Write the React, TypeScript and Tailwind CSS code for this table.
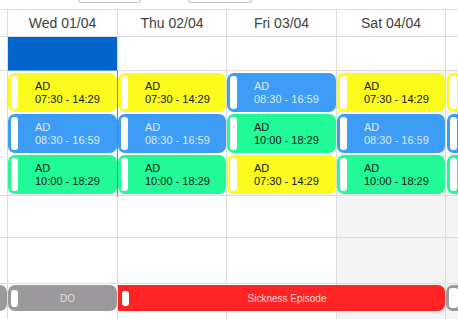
import React from "react";

/** Grille planning — vue semaine (colonnes jour) */
const cols = "grid grid-cols-[8px_110px_109px_110px_109px_1fr]";

type Kind = "am" | "mid" | "pm";

const shiftStyle: Record<Kind, { bg: string; text: string; time: string }> = {
    am: { bg: "bg-[#fbfb1e]", text: "text-[#151515]", time: "07:30 - 14:29" },
    mid: { bg: "bg-[#3d9df6]", text: "text-[#dcecff]", time: "08:30 - 16:59" },
    pm: { bg: "bg-[#22f997]", text: "text-[#151515]", time: "10:00 - 18:29" },
};

function Shift({ kind, clip }: { kind: Kind; clip?: boolean }) {
    const s = shiftStyle[kind];
    return (
        <div className={`flex h-[39px] shrink-0 items-center rounded-[7px] ${s.bg} ${clip ? "ml-[1px] w-[40px]" : ""}`}>
            <span className="ml-[3px] h-[33px] w-[7px] shrink-0 rounded-[3px] bg-white" />
            {/* le texte du dimanche est hors écran */}
            {!clip && (
                <div className={`ml-[17px] whitespace-nowrap text-[11px] leading-[13px] ${s.text}`}>
                    <div>AD</div>
                    <div>{s.time}</div>
                </div>
            )}
        </div>
    );
}

const days = ["Wed 01/04", "Thu 02/04", "Fri 03/04", "Sat 04/04"];

// ordre des shifts par jour (Wed, Thu, Fri, Sat, Sun)
const plan: Kind[][] = [
    ["am", "mid", "pm"],
    ["am", "mid", "pm"],
    ["mid", "pm", "am"],
    ["am", "mid", "pm"],
    ["am", "mid", "pm"],
];

export default function App() {
    return (
        <div
            className="h-[319px] w-[458px] overflow-hidden bg-white"
            style={{ fontFamily: '"Liberation Sans", Arial, sans-serif' }}
        >
            {/* Toolbar (coupée) */}
            <div className="flex h-[10px] border-b border-[#dcdcdc]">
                <div className="ml-[78px] h-[3px] w-[63px] rounded-b-[3px] border border-t-0 border-[#c4c4c4]" />
                <div className="ml-[47px] h-[3px] w-[64px] rounded-b-[3px] border border-t-0 border-[#c4c4c4]" />
            </div>

            {/* En-têtes jours */}
            <div className={`${cols} h-[27px]`}>
                <div className="border-r border-b border-[#dcdcdc]" />
                {days.map((d) => (
                    <div
                        key={d}
                        className="flex items-center justify-center border-r border-b border-[#dcdcdc] text-[14px] text-[#404040]"
                    >
                        {d}
                    </div>
                ))}
                <div className="border-b border-[#dcdcdc]" />
            </div>

            {/* Ligne journée entière */}
            <div className={`${cols} h-[34px]`}>
                <div className="border-r border-b border-[#dcdcdc]" />
                <div className="border-r border-b border-r-[#dcdcdc] border-b-[#5b9be6] bg-[#0066cc]" />
                <div className="border-r border-b border-[#dcdcdc]" />
                <div className="border-r border-b border-[#dcdcdc]" />
                <div className="border-r border-b border-[#dcdcdc]" />
                <div className="border-b border-[#dcdcdc]" />
            </div>

            {/* Shifts */}
            <div className={`${cols} h-[125px]`}>
                <div className="border-r border-b border-[#dcdcdc]" />
                {plan.map((day, i) => (
                    <div
                        key={i}
                        className={`flex flex-col gap-[2px] border-b border-[#dcdcdc] pt-[2px] ${
                            i === 0 ? "border-r border-r-[#4a86e0]" : i < 4 ? "border-r" : ""
                        } ${i >= 3 ? "bg-[#f4f4f4]" : ""}`}
                    >
                        {day.map((k, j) => (
                            <Shift key={j} kind={k} clip={i === 4} />
                        ))}
                    </div>
                ))}
            </div>

            {/* Lignes vides */}
            {["h-[42px]", "h-[46px]"].map((h) => (
                <div key={h} className={`${cols} ${h}`}>
                    <div className="border-r border-b border-[#dcdcdc]" />
                    <div className="border-r border-b border-[#dcdcdc]" />
                    <div className="border-r border-b border-[#dcdcdc]" />
                    <div className="border-r border-b border-[#dcdcdc]" />
                    <div className="border-r border-b border-[#dcdcdc] bg-[#f4f4f4]" />
                    <div className="border-b border-[#dcdcdc] bg-[#f4f4f4]" />
                </div>
            ))}

            {/* Absences */}
            <div className={`${cols} h-[36px] grid-rows-[36px]`}>
                <div className="col-start-1 row-start-1 border-r border-[#dcdcdc]" />
                <div className="col-start-2 row-start-1 border-r border-[#dcdcdc]" />
                <div className="col-start-3 row-start-1 border-r border-[#dcdcdc]" />
                <div className="col-start-4 row-start-1 border-r border-[#dcdcdc]" />
                <div className="col-start-5 row-start-1 border-r border-[#dcdcdc] bg-[#f4f4f4]" />
                <div className="col-start-6 row-start-1 bg-[#f4f4f4]" />

                <div className="col-start-1 row-start-1 mt-[1px] mr-[1px] h-[26px] rounded-r-[7px] bg-[#9b999b]" />
                <div className="col-start-2 row-start-1 mt-[1px] mr-[1px] flex h-[26px] items-center rounded-[7px] bg-[#9b999b]">
                    <span className="ml-[3px] h-[17px] w-[7px] shrink-0 rounded-[3px] bg-white" />
                    <span className="flex-1 text-center text-[10px] text-[#dedede]">DO</span>
                </div>
                <div className="col-span-3 col-start-3 row-start-1 mt-[1px] mr-[1px] flex h-[26px] items-center rounded-r-[7px] bg-[#fe2424]">
                    <span className="ml-[4px] h-[15px] w-[7px] shrink-0 rounded-[3px] bg-white" />
                    <span className="flex-1 text-center text-[10px] text-[#ffd6d6]">Sickness Episode</span>
                </div>
                <div className="col-start-6 row-start-1 mt-[1px] flex h-[26px] items-center rounded-l-[7px] bg-[#9b999b]">
                    <span className="ml-[3px] h-[20px] w-[9px] shrink-0 rounded-[3px] bg-white" />
                </div>
            </div>
        </div>
    );
}
